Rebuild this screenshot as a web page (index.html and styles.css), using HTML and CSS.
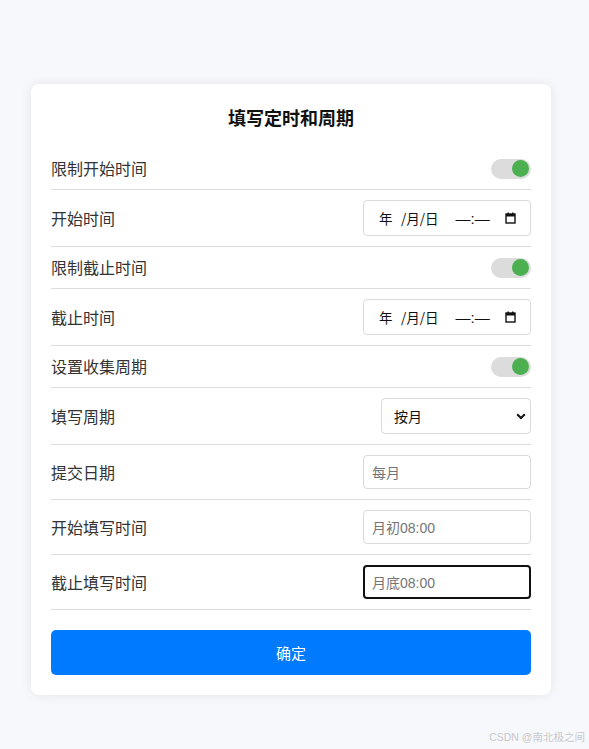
FILE: index.html
```html
<!DOCTYPE html>
<html lang="zh-CN">
<head>
<meta charset="utf-8">
<title>填写定时和周期</title>
<link rel="stylesheet" href="styles.css">
</head>
<body>
<div class="page">
  <div class="card">
    <h2 class="title">填写定时和周期</h2>

    <div class="row">
      <span class="label">限制开始时间</span>
      <span class="toggle"><span class="knob"></span></span>
    </div>
    <div class="row">
      <span class="label">开始时间</span>
      <div class="field date">
        <span class="seg-year">年</span><span class="seg-md">/月/日</span><span class="seg-time">—:—</span>
        <svg class="cal" width="11" height="12" viewBox="0 0 11 12"><rect x="1" y="2" width="9" height="9" fill="none" stroke="#111" stroke-width="1.4"/><rect x="1" y="2" width="9" height="2.5" fill="#111"/><rect x="2.5" y="0.5" width="1.4" height="2" fill="#111"/><rect x="7.1" y="0.5" width="1.4" height="2" fill="#111"/></svg>
      </div>
    </div>
    <div class="row">
      <span class="label">限制截止时间</span>
      <span class="toggle"><span class="knob"></span></span>
    </div>
    <div class="row">
      <span class="label">截止时间</span>
      <div class="field date">
        <span class="seg-year">年</span><span class="seg-md">/月/日</span><span class="seg-time">—:—</span>
        <svg class="cal" width="11" height="12" viewBox="0 0 11 12"><rect x="1" y="2" width="9" height="9" fill="none" stroke="#111" stroke-width="1.4"/><rect x="1" y="2" width="9" height="2.5" fill="#111"/><rect x="2.5" y="0.5" width="1.4" height="2" fill="#111"/><rect x="7.1" y="0.5" width="1.4" height="2" fill="#111"/></svg>
      </div>
    </div>
    <div class="row">
      <span class="label">设置收集周期</span>
      <span class="toggle"><span class="knob"></span></span>
    </div>
    <div class="row">
      <span class="label">填写周期</span>
      <div class="field select"><span>按月</span>
        <svg class="chev" width="10" height="7" viewBox="0 0 10 7"><path d="M1.2 1.3 L5 5 L8.8 1.3" fill="none" stroke="#111" stroke-width="2"/></svg>
      </div>
    </div>
    <div class="row">
      <span class="label">提交日期</span>
      <div class="field text"><span class="ph">每月</span></div>
    </div>
    <div class="row">
      <span class="label">开始填写时间</span>
      <div class="field text"><span class="ph">月初08:00</span></div>
    </div>
    <div class="row">
      <span class="label">截止填写时间</span>
      <div class="field text focused"><span class="ph">月底08:00</span></div>
    </div>

    <button class="submit">确定</button>
  </div>
</div>
<div class="watermark">CSDN @南北极之间</div>
</body>
</html>
```
FILE: styles.css
```css
* { box-sizing: border-box; }
html, body { margin: 0; padding: 0; }
body {
  background: #f7f8fc;
  font-family: "Noto Sans CJK SC", "Liberation Sans", sans-serif;
  color: #333;
  width: 589px;
  height: 749px;
  position: relative;
  overflow: hidden;
}
.page {
  padding: 84px 0 0 31px;
  display: flex;
}
.card {
  width: 520px;
  background: #fff;
  border-radius: 8px;
  box-shadow: 0 0 12px rgba(0,0,0,0.08);
  padding: 20px;
}
.title {
  margin: 0 0 18px;
  text-align: center;
  font-size: 18px;
  line-height: 26px;
  font-weight: 700;
  color: #111;
}
.row {
  display: flex;
  align-items: center;
  justify-content: space-between;
  padding: 10px 0;
  border-bottom: 1px solid #ddd;
}
.label {
  font-size: 16px;
  line-height: 21px;
  color: #333;
}
.toggle {
  width: 40px;
  height: 20px;
  border-radius: 10px;
  background: #dcdcdc;
  display: flex;
  align-items: center;
  justify-content: flex-end;
  padding-right: 2px;
}
.knob {
  width: 17px;
  height: 17px;
  border-radius: 50%;
  background: #4caf50;
}
.field {
  border: 1px solid #dadada;
  border-radius: 4px;
  background: #fff;
  display: flex;
  align-items: center;
  font-size: 14px;
  color: #111;
}
.date {
  width: 168px;
  height: 36px;
  padding: 0 0 0 15px;
}
.seg-year { width: 12px; margin-right: 10px; font-size: 13.5px; }
.seg-md { font-size: 13.5px; }
.seg-time {
  margin-left: 17px;
  font-family: "Liberation Sans", sans-serif;
  font-size: 15px;
}
.cal { margin-left: 15px; }
.select {
  width: 150px;
  height: 36px;
  padding: 0 4px 0 12px;
  justify-content: space-between;
}
.text {
  width: 168px;
  height: 34px;
  padding: 0 8px;
  font-family: "Liberation Sans", "Noto Sans CJK SC", sans-serif;
}
.ph { color: #757575; }
.focused {
  border: 2px solid #111;
  padding: 0 7px;
}
.submit {
  display: block;
  width: 100%;
  height: 45px;
  margin-top: 20px;
  border: none;
  border-radius: 5px;
  background: #007bff;
  color: #fff;
  font-family: "Noto Sans CJK SC", "Liberation Sans", sans-serif;
  font-size: 15px;
}
.watermark {
  position: absolute;
  right: 4px;
  bottom: 5px;
  font-size: 10.5px;
  color: #c8c8c8;
  font-family: "Liberation Sans", "Noto Sans CJK SC", sans-serif;
}
```
